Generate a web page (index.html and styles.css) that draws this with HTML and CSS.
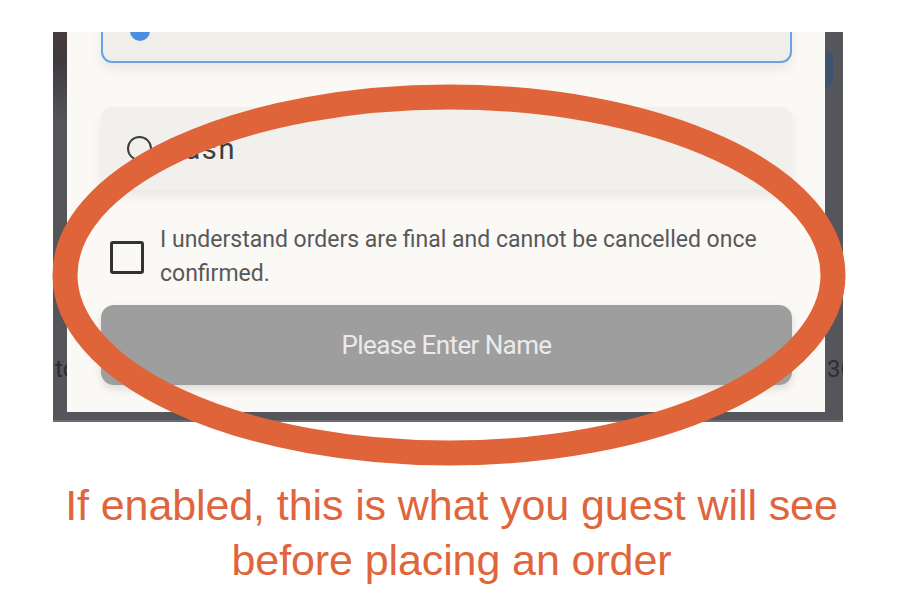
FILE: index.html
```html
<!DOCTYPE html>
<html lang="en">
<head>
<meta charset="utf-8">
<title>Order confirmation checkbox</title>
<link rel="stylesheet" href="styles.css">
</head>
<body>
<div class="page">
  <div class="shot">
    <div class="side side-left"><span class="behind behind-left">tc</span></div>
    <div class="modal">
      <div class="card card-selected"><span class="radio radio-on"></span></div>
      <div class="card card-cash">
        <span class="radio"></span>
        <span class="card-label">Cash</span>
      </div>
      <label class="agree">
        <span class="checkbox"></span>
        <span class="agree-text">I understand orders are final and cannot be cancelled once confirmed.</span>
      </label>
      <div class="submit">Please Enter Name</div>
    </div>
    <div class="side side-right"><span class="pill"></span><span class="behind behind-right">3C</span></div>
    <svg class="ring" width="903" height="500" viewBox="0 0 903 500" aria-hidden="true">
      <ellipse cx="449" cy="275" rx="384" ry="178" fill="none" stroke="#e0643a" stroke-width="25"/>
    </svg>
  </div>
  <p class="caption">If enabled, this is what you guest will see<br>before placing an order</p>
</div>
</body>
</html>
```
FILE: styles.css
```css
* { box-sizing: border-box; }
html, body { margin: 0; padding: 0; background: #ffffff; }
body { width: 903px; height: 604px; overflow: hidden; font-family: Roboto, "Liberation Sans", sans-serif; }

.page { position: relative; width: 903px; height: 604px; padding-top: 32px; }

.shot {
  margin-left: 53px;
  width: 790px;
  height: 390px;
  background: #55565b;
  display: flex;
  align-items: flex-start;
  border-bottom: 2px solid #6b6c70;
}

.side { position: relative; height: 380px; overflow: hidden; }
.side-left { width: 14px; background: linear-gradient(#4a3a3e 0, #3f3a40 30px, #555659 90px, #55565b 100%); }
.side-right { width: 18px; }
.pill {
  position: absolute; left: 0; top: 18px;
  width: 8px; height: 38px; border-radius: 0 8px 8px 0;
  background: #3f526f;
}
.behind {
  position: absolute; top: 322px;
  font-size: 24px; color: #2c2d31; line-height: 30px;
}
.behind-left { left: 2px; }
.behind-right { left: 2px; }

.modal {
  width: 758px;
  height: 380px;
  background: #faf9f5;
  overflow: hidden;
  padding: 0 33px 0 34px;
  display: flex;
  flex-direction: column;
}

.card {
  border-radius: 11px;
  background: #efeee9;
  position: relative;
  box-shadow: 0 6px 12px rgba(0,0,0,0.07);
}
.card-selected {
  height: 81px;
  margin-top: -50px;
  border: 2px solid #6aa2e6;
}
.card-cash {
  margin-top: 44px;
  height: 83px;
  background: #f1f0ec;
  display: flex;
  align-items: center;
  padding-left: 26px;
  gap: 12px;
}
.radio {
  width: 25px; height: 25px;
  border-radius: 50%;
  border: 2px solid #3c3c3c;
  flex: none;
}
.radio-on {
  position: absolute; left: 27px; bottom: 20px;
  border-color: #4a90e2; background: #4a90e2;
  width: 20px; height: 20px;
}
.card-label { font-size: 29px; letter-spacing: 1.6px; color: #3e3e3e; margin-top: 1px; }

.agree {
  display: flex;
  align-items: center;
  margin-top: 33px;
  padding-left: 9px;
  gap: 16px;
}
.checkbox {
  width: 34px; height: 33px;
  border: 3px solid #333335;
  border-radius: 3px;
  flex: none;
}
.agree-text {
  font-size: 23px;
  line-height: 34px;
  color: #58585a;
  letter-spacing: 0;
  width: 615px;
}

.submit {
  margin-top: 14px;
  height: 80px;
  border-radius: 13px;
  background: #9e9e9e;
  color: #ebebeb;
  font-size: 26px;
  letter-spacing: -0.6px;
  display: flex;
  align-items: center;
  justify-content: center;
  box-shadow: 0 4px 8px rgba(0,0,0,0.12);
}

.ring { position: absolute; left: 0; top: 0; }

.caption {
  margin: 56px 0 0;
  text-align: center;
  font-family: "Liberation Sans", Arial, sans-serif;
  font-size: 43px;
  line-height: 55px;
  color: #e0653c;
  letter-spacing: -0.1px;
}
```
